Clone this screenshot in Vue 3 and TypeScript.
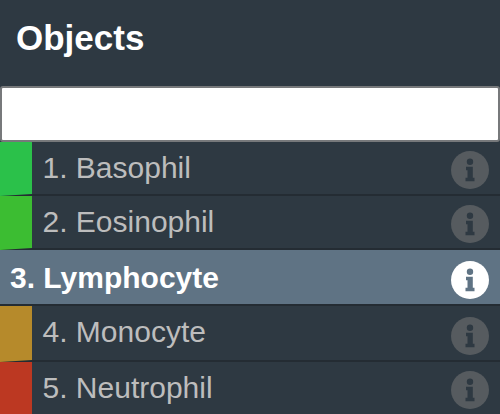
<script setup lang="ts">
interface Item { name: string; color: string; selected?: boolean }
const items: Item[] = [
  { name: '1. Basophil', color: '#2bc14a' },
  { name: '2. Eosinophil', color: '#3cbd32' },
  { name: '3. Lymphocyte', color: '#5f7384', selected: true },
  { name: '4. Monocyte', color: '#b68a2b' },
  { name: '5. Neutrophil', color: '#bc3822' },
]
</script>

<template>
  <div class="panel">
    <h1 class="title">Objects</h1>
    <input class="search" type="text" />
    <ul class="list">
      <li
        v-for="item in items"
        :key="item.name"
        class="row"
        :class="{ selected: item.selected }"
        :style="{ borderLeftColor: item.color }"
      >
        <span class="label">{{ item.name }}</span>
        <svg class="info" viewBox="0 0 38 38" aria-hidden="true">
          <circle class="disc" cx="19" cy="19" r="19" />
          <g class="glyph">
            <circle cx="19" cy="10.8" r="3.2" />
            <path d="M15 15.8h6.8v11h1.7v3.4h-9v-3.4h2v-7.6H15z" />
          </g>
        </svg>
      </li>
    </ul>
  </div>
</template>

<style scoped>
.panel {
  width: 500px;
  height: 414px;
  overflow: hidden;
  background: #2e3942;
  font-family: "Liberation Sans", Arial, sans-serif;
}
.title {
  margin: 0;
  padding: 18px 16px 0;
  height: 69px;
  box-sizing: border-box;
  font-size: 35px;
  line-height: 40px;
  font-weight: 700;
  color: #fff;
}
.search {
  display: block;
  box-sizing: border-box;
  width: 100%;
  height: 56px;
  margin: 17px 0 0;
  padding: 0 8px;
  background: #fff;
  border: 2px solid #77797b;
  border-radius: 3px;
  outline: none;
}
.list {
  margin: 0;
  padding: 0;
  list-style: none;
}
.row {
  display: flex;
  align-items: center;
  box-sizing: border-box;
  height: 54px;
  padding: 0 11px 0 10.5px;
  border-left: 32px solid transparent;
  border-bottom: 2px solid #242c33;
}
.selected,
.selected ~ .row {
  height: 56px;
}
.selected {
  padding-left: 10px;
  border-left-width: 0;
  background: #5f7384;
}
.label {
  flex: 1;
  font-size: 30px;
  color: #bdbdbd;
}
.selected ~ .row .label {
  padding-bottom: 2px;
}
.selected .label {
  padding-top: 2px;
  font-weight: 700;
  color: #fff;
}
.info {
  width: 38px;
  height: 38px;
  flex: none;
  margin-top: 4px;
}
.selected .info,
.selected ~ .row .info {
  margin-top: 6px;
}
.selected ~ .row:last-child .info {
  margin-top: 2px;
}
.disc {
  fill: #565b5f;
}
.glyph {
  fill: #2e3942;
}
.selected .disc {
  fill: #fff;
}
.selected .glyph {
  fill: #5f7384;
}
</style>
